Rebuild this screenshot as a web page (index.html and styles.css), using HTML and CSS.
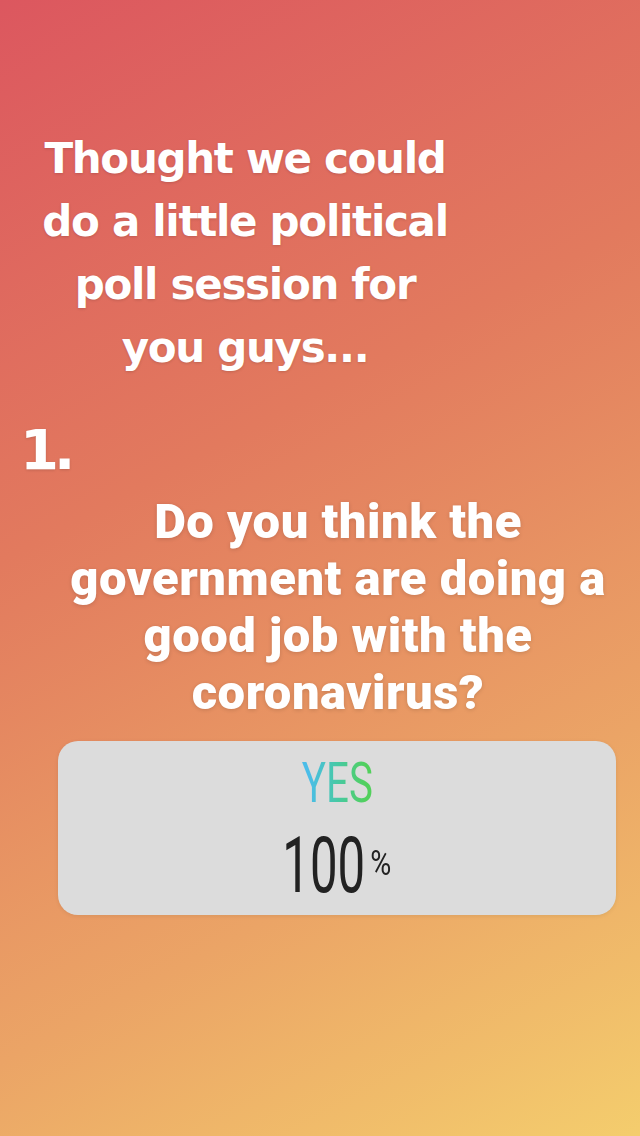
FILE: index.html
```html
<!DOCTYPE html>
<html lang="en">
<head>
    <meta charset="UTF-8">
    <meta name="viewport" content="width=device-width, initial-scale=1.0">
    <title>Political Poll</title>
    <link rel="stylesheet" href="styles.css">
</head>
<body>
    <div class="story">
        <!-- Intro text -->
        <p class="intro">Thought we could<br>do a little political<br>poll session for<br>you guys...</p>

        <div class="number">1.</div>

        <!-- Question -->
        <p class="question">Do you think the<br>government are doing a<br>good job with the<br>coronavirus?</p>

        <!-- Poll result -->
        <div class="poll">
            <div class="poll-option">YES</div>
            <div class="poll-result"><span class="digits">100</span><span class="pct">%</span></div>
        </div>
    </div>
</body>
</html>
```

FILE: styles.css
```css
body {
    margin: 0;
    padding: 0;
    font-family: "Liberation Sans", Arial, sans-serif;
}

.story {
    width: 640px;
    height: 1136px;
    background: linear-gradient(152deg, #dc575f 0%, #e27a5e 38%, #eba466 72%, #f4cd6d 100%);
    box-sizing: border-box;
    padding-top: 127px;
    overflow: hidden;
}

.intro {
    width: 490px;
    margin: 0;
    text-align: center;
    color: #fff;
    font-family: "DejaVu Sans", sans-serif;
    font-weight: bold;
    font-size: 42px;
    line-height: 63px;
    letter-spacing: -1.3px;
    text-shadow: 0 1px 3px rgba(0, 0, 0, 0.15);
}

.number {
    margin: 41px 0 0 20px;
    color: #fff;
    font-family: "DejaVu Sans", sans-serif;
    font-weight: bold;
    font-size: 56px;
    line-height: 60px;
    letter-spacing: -5px;
    text-shadow: 0 1px 3px rgba(0, 0, 0, 0.15);
}

.question {
    margin: 13px 0 0 36px;
    width: 604px;
    text-align: center;
    color: #fff;
    font-family: "Roboto", sans-serif;
    font-weight: 900;
    font-size: 49px;
    line-height: 57px;
    letter-spacing: 0.5px;
    text-shadow: 0 1px 4px rgba(0, 0, 0, 0.15);
}

.poll {
    margin: 20px 0 0 58px;
    width: 558px;
    height: 174px;
    background: #dcdcdc;
    border-radius: 20px;
    display: flex;
    flex-direction: column;
    align-items: center;
    box-shadow: 0 1px 4px rgba(0, 0, 0, 0.08);
}

.poll-option {
    margin-top: 12px;
    font-family: "Roboto", sans-serif;
    font-weight: 400;
    font-size: 56px;
    line-height: 60px;
    transform: scaleX(0.72);
    background: linear-gradient(90deg, #4bbde8 10%, #47c9a4 50%, #52d05c 90%);
    -webkit-background-clip: text;
    background-clip: text;
    color: transparent;
}

.poll-result {
    margin-top: 13px;
    display: flex;
    align-items: flex-start;
    color: #222;
    font-family: "Roboto", sans-serif;
    font-weight: 400;
}

.digits {
    font-size: 78px;
    line-height: 80px;
    display: inline-block;
    transform: scaleX(0.63);
    margin: 0 -22px;
}

.pct {
    font-size: 35px;
    line-height: 35px;
    margin: 20px 0 0 0;
    display: inline-block;
    transform: scaleX(0.82);
}
```
